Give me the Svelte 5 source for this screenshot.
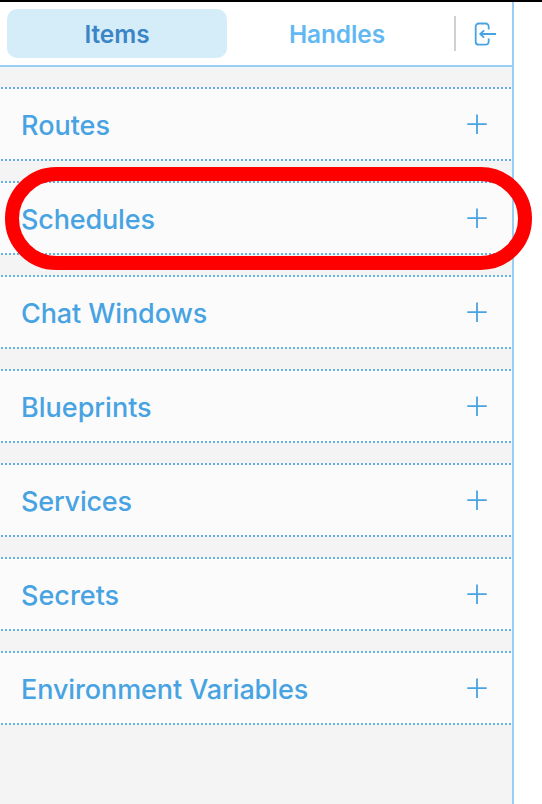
<script>
  const sections = [
    { label: 'Routes', spacing: 0 },
    { label: 'Schedules', spacing: -0.16 },
    { label: 'Chat Windows', spacing: -0.1 },
    { label: 'Blueprints', spacing: 0 },
    { label: 'Services', spacing: -0.2 },
    { label: 'Secrets', spacing: 0 },
    { label: 'Environment Variables', spacing: -0.1 }
  ];
</script>

<main>
  <aside>
    <header>
      <button class="tab active">Items</button>
      <button class="tab handles">Handles</button>
      <span class="divider"></span>
      <button class="collapse" aria-label="Collapse sidebar">
        <svg width="24" height="28" viewBox="0 0 24 28" fill="none" stroke="#48a3e2" stroke-width="1.8" stroke-linecap="butt" stroke-linejoin="round">
          <path d="M15.7 9.6V6.5a3 3 0 0 0-3-3H5.7a3 3 0 0 0-3 3V21.7a3 3 0 0 0 3 3h7a3 3 0 0 0 3-3V18.4" />
          <path d="M23 14H7M11.2 10.4L7.2 14l4 3.6" />
        </svg>
      </button>
    </header>
    <div class="list">
      {#each sections as section}
        <section>
          <span class="label" style="letter-spacing: {section.spacing}px">{section.label}</span>
          <button class="add" aria-label="Add">
            <svg width="20" height="20" viewBox="0 0 20 20" stroke="#48a3e2" stroke-width="1.8">
              <path d="M0.3 10.1H19.7M10 0.6V19.9" />
            </svg>
          </button>
        </section>
      {/each}
    </div>
  </aside>
  <div class="highlight"></div>
</main>

<style>
  :global(body) { background: #fff; overflow: hidden; }
  main {
    position: relative;
    box-sizing: border-box;
    width: 542px;
    height: 804px;
    border-top: 2px solid #000;
    overflow: hidden;
    font-family: Inter, "Liberation Sans", sans-serif;
  }
  button { border: 0; background: none; padding: 0; margin: 0; font: inherit; display: block; }
  aside {
    width: 512px;
    height: 802px;
    display: flex;
    flex-direction: column;
    border-right: 2px solid #98cff2;
    background: #f4f4f4;
  }
  header {
    box-sizing: border-box;
    height: 65px;
    display: flex;
    align-items: center;
    padding: 0 0 1px 7px;
    background: #fff;
    border-bottom: 2px solid #98cff2;
  }
  .tab {
    width: 220px;
    height: 49px;
    border-radius: 10px;
    font-size: 24.4px;
    font-weight: 600;
    letter-spacing: -0.05px;
    line-height: 49px;
    padding-top: 1px;
    color: #62b8f2;
  }
  .active { background: #d5edf9; color: #3a85c6; }
  .divider { width: 2px; height: 35px; margin-left: 7px; background: #d0d0d3; }
  .collapse { margin: 2px 0 0 17px; }
  svg { display: block; }
  .list { display: flex; flex-direction: column; gap: 20px; padding-top: 20px; }
  section {
    box-sizing: border-box;
    height: 74px;
    display: flex;
    align-items: center;
    justify-content: space-between;
    padding: 0 25px 0 21px;
    --dots: repeating-linear-gradient(90deg, transparent 0 1px, #62b3e5 1px 3px, transparent 3px 4px);
    background: var(--dots) top / 100% 2px no-repeat, var(--dots) bottom / 100% 2px no-repeat, #fbfbfb;
  }
  .label { font-size: 27px; font-weight: 500; line-height: 40px; padding-top: 3px; color: #48a3e2; white-space: nowrap; }
  .highlight {
    position: absolute;
    left: 5px;
    top: 165.3px;
    box-sizing: border-box;
    width: 526.5px;
    height: 102.3px;
    border: 14px solid #f00;
    border-radius: 52px;
  }
</style>
